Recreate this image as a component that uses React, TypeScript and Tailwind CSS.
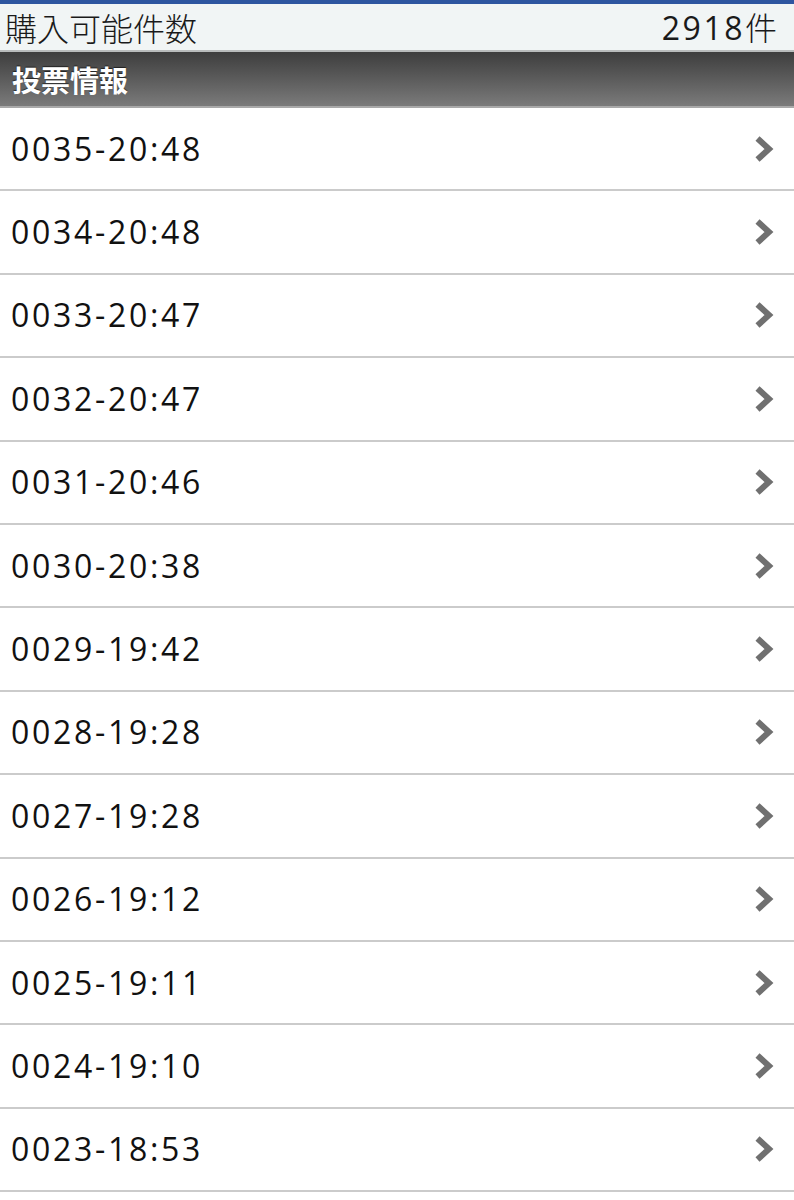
import React from "react";

const rows = [
  "0035-20:48",
  "0034-20:48",
  "0033-20:47",
  "0032-20:47",
  "0031-20:46",
  "0030-20:38",
  "0029-19:42",
  "0028-19:28",
  "0027-19:28",
  "0026-19:12",
  "0025-19:11",
  "0024-19:10",
  "0023-18:53",
];

function Chevron() {
  return (
    <svg width="22" height="28" viewBox="0 0 22 28" className="shrink-0">
      <path d="M4.5 3.5 L16 14 L4.5 24.5" fill="none" stroke="#707070" strokeWidth="6" strokeLinejoin="miter" strokeLinecap="butt" />
    </svg>
  );
}

export default function App() {
  return (
    <div
      className="w-[794px] h-[1200px] overflow-hidden bg-white text-black"
      style={{ fontFamily: '"Open Sans", "Noto Sans CJK JP", sans-serif' }}
    >
      <div className="h-[4px] bg-[#2e56a0]" />
      <div className="h-[48px] bg-[#f1f5f5] border-b-2 border-[#b9bcbc] flex items-center justify-between pl-[5px] pr-[17px] text-[32px] leading-none text-[#1a1a1a]">
        <span className="font-light [font-family:'Noto_Sans_CJK_JP',sans-serif]">購入可能件数</span>
        <span>
          <span className="tracking-[2.5px]">2918</span>
          <span className="font-light [font-family:'Noto_Sans_CJK_JP',sans-serif]">件</span>
        </span>
      </div>
      <div className="h-[56px] bg-gradient-to-b from-[#3e3e3e] to-[#7b7b7b] border-b-2 border-[#a9a9a9] flex items-center pl-[12px]">
        <span className="text-white font-bold text-[29px] leading-none [text-shadow:0_-1px_1px_rgba(0,0,0,0.6)] [font-family:'Noto_Sans_CJK_JP',sans-serif]">
          投票情報
        </span>
      </div>
      <div>
        {rows.map((r) => (
          <div
            key={r}
            className="h-[83.4px] border-b-2 border-[#cbcbcb] flex items-center justify-between pl-[11px] pr-[19px]"
          >
            <span className="text-[32px] leading-none text-[#111] tracking-[2.7px]">{r}</span>
            <Chevron />
          </div>
        ))}
      </div>
    </div>
  );
}
